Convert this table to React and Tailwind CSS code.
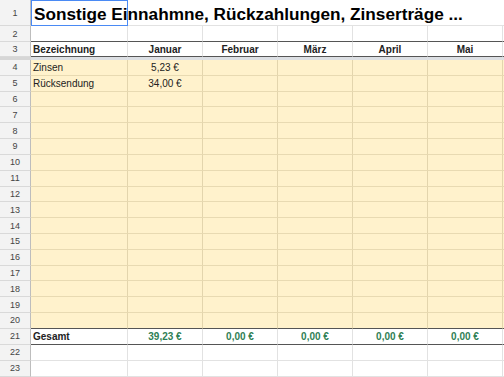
import React from 'react';

const monthCols = ['Januar', 'Februar', 'März', 'April', 'Mai'];

const rows = [
  { n: 4, label: 'Zinsen', jan: '5,23 €' },
  { n: 5, label: 'Rücksendung', jan: '34,00 €' },
];
for (let i = 6; i <= 20; i++) rows.push({ n: i, label: '', jan: '' });

function RowNum({ n, className = '' }) {
  return (
    <div className={'w-[31px] shrink-0 flex items-center justify-center pt-[1px] bg-[#f3f3f3] border-r border-r-[#bdbdbd] border-b border-b-[#d9d9d9] text-[9px] text-[#444] ' + className}>
      {n}
    </div>
  );
}

export default function App() {
  return (
    <div className="w-[504px] h-[377px] overflow-hidden bg-white font-['Liberation_Sans',Arial,sans-serif] text-[10px] text-[#222] leading-none select-none">
      {/* row 1 - title, A1 selected */}
      <div className="flex h-[26px]">
        <RowNum n={1} />
        <div className="relative w-[97px] shrink-0 border border-[#4a8af4]">
          <span className="absolute left-[2px] top-[5px] whitespace-nowrap text-[17.2px] font-bold text-black">
            Sonstige Einnahmne, Rückzahlungen, Zinserträge ...
          </span>
        </div>
        <div className="flex-1 border-b border-[#e2e2e2]" />
      </div>

      {/* row 2 */}
      <div className="flex h-[16px]">
        <RowNum n={2} />
        <div className="w-[97px] shrink-0 border-r border-r-[#e2e2e2] border-b border-b-[#555]" />
        {monthCols.map((m) => (
          <div key={m} className="w-[75px] shrink-0 border-r border-r-[#e2e2e2] border-b border-b-[#555]" />
        ))}
        <div className="flex-1 border-b border-b-[#555]" />
      </div>

      {/* row 3 - header */}
      <div className="flex h-[15px]">
        <RowNum n={3} />
        <div className="w-[97px] shrink-0 flex items-center pt-[1px] pl-[2px] font-bold border-r border-r-[#e2e2e2] border-b border-b-[#555]">
          Bezeichnung
        </div>
        {monthCols.map((m) => (
          <div key={m} className="w-[75px] shrink-0 flex items-center justify-center pt-[1px] font-bold border-r border-r-[#e2e2e2] border-b border-b-[#555]">
            {m}
          </div>
        ))}
        <div className="flex-1 border-b border-b-[#555]" />
      </div>

      {/* frozen divider */}
      <div className="flex h-[3px]">
        <div className="w-[31px] shrink-0 bg-[#d6d6d6]" />
        <div className="flex-1 bg-[#dcdfe3]" />
      </div>

      {/* rows 4-20 yellow input area */}
      {rows.map((r) => {
        const last = r.n === 20;
        const bb = last ? 'border-b-[#555]' : 'border-b-[#e8dab2]';
        return (
          <div key={r.n} className="flex h-[15.82px]">
            <RowNum n={r.n} />
            <div className={'w-[97px] shrink-0 flex items-center pt-[1px] pl-[2px] bg-[#fff2cc] border-r border-r-[#e3d5ad] border-b ' + bb}>
              {r.label}
            </div>
            <div className={'w-[75px] shrink-0 flex items-center justify-center pt-[1px] bg-[#fff2cc] border-r border-r-[#e3d5ad] border-b ' + bb}>
              {r.jan}
            </div>
            {monthCols.slice(1).map((m) => (
              <div key={m} className={'w-[75px] shrink-0 bg-[#fff2cc] border-r border-r-[#e3d5ad] border-b ' + bb} />
            ))}
            <div className={'flex-1 bg-[#fff2cc] border-b ' + bb} />
          </div>
        );
      })}

      {/* row 21 - totals */}
      <div className="flex h-[16px]">
        <RowNum n={21} />
        <div className="w-[97px] shrink-0 flex items-center pt-[1px] pl-[2px] font-bold border-r border-r-[#e2e2e2] border-b border-b-[#555]">
          Gesamt
        </div>
        {['39,23 €', '0,00 €', '0,00 €', '0,00 €', '0,00 €'].map((v, i) => (
          <div key={i} className="w-[75px] shrink-0 flex items-center justify-center pt-[1px] font-bold text-[#2f8054] border-r border-r-[#e2e2e2] border-b border-b-[#555]">
            {v}
          </div>
        ))}
        <div className="flex-1 border-b border-b-[#555]" />
      </div>

      {/* rows 22-23 */}
      {[22, 23].map((n) => (
        <div key={n} className="flex h-[16px]">
          <RowNum n={n} />
          <div className="w-[97px] shrink-0 border-r border-b border-[#e2e2e2]" />
          {monthCols.map((m) => (
            <div key={m} className="w-[75px] shrink-0 border-r border-b border-[#e2e2e2]" />
          ))}
          <div className="flex-1 border-b border-[#e2e2e2]" />
        </div>
      ))}
    </div>
  );
}
